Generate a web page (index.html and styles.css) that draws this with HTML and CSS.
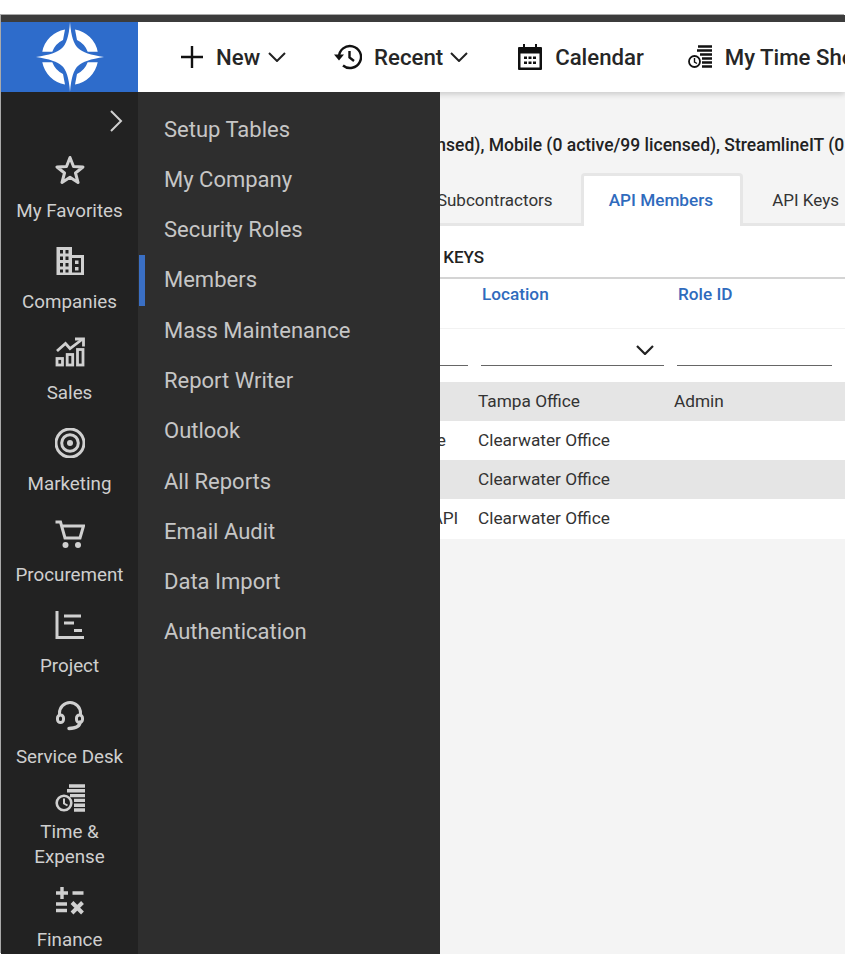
FILE: index.html
```html
<!DOCTYPE html>
<html lang="en">
<head>
<meta charset="utf-8">
<title>Members</title>
<link rel="stylesheet" href="styles.css">
</head>
<body>
<div class="frame">
  <div class="topline"></div>
  <div class="shell">
    <aside class="rail">
      <div class="logo">
        <svg width="70" height="70" viewBox="0 0 70 70" fill="#fff">
          <path d="M35 0 Q36.500 21 43.500 26.500 Q49 32 69 35 Q49 38 43.500 43.500 Q36.500 49 35 70 Q33.500 49 26.500 43.500 Q21 38 1 35 Q21 32 26.500 26.500 Q33.500 21 35 0Z"/>
          <path d="M40 7.500 A28 28 0 0 1 62.700 29.700 L52.700 29.700 A21 21 0 0 0 42 18Z"/>
          <path d="M40 62.500 A28 28 0 0 0 62.700 40.300 L52.700 40.300 A21 21 0 0 1 42 52Z"/>
          <path d="M30 7.500 A28 28 0 0 0 7.300 29.700 L17.300 29.700 A21 21 0 0 1 28 18Z"/>
          <path d="M30 62.500 A28 28 0 0 1 7.300 40.300 L17.300 40.300 A21 21 0 0 0 28 52Z"/>
        </svg>
      </div>
      <div class="rail-body">
        <div class="collapse">
          <svg width="14" height="22" viewBox="0 0 14 22" fill="none" stroke="#d0d0d0" stroke-width="2"><path d="M2 1 L12 11 L2 21"/></svg>
        </div>
        <div class="rail-item">
          <svg class="rail-icon" viewBox="0 0 30 30" fill="none" stroke="#d0d0d0" stroke-width="3" stroke-linejoin="round"><path d="M15 2.500 L18.500 11.500 L28 12 L20.500 18 L23 27.500 L15 22.300 L7 27.500 L9.500 18 L2 12 L11.500 11.500Z"/></svg>
          <span>My Favorites</span>
        </div>
        <div class="rail-item">
          <svg class="rail-icon" viewBox="0 0 30 30" fill="#d0d0d0"><path fill-rule="evenodd" d="M1.500 1 H17 V9 H29 V29 H1.500Z M5 4 V7.500 H8 V4Z M10.500 4 V7.500 H13.500 V4Z M5 10.500 V14 H8 V10.500Z M10.500 10.500 V14 H13.500 V10.500Z M5 17 V20.500 H8 V17Z M10.500 17 V20.500 H13.500 V17Z M5 23.500 V26.500 H8 V23.500Z M10.500 23.500 V26.500 H13.500 V23.500Z M17 12 V26.500 H26 V12Z M20 14.500 H23.500 V18 H20Z M20 21 H23.500 V24.500 H20Z"/></svg>
          <span>Companies</span>
        </div>
        <div class="rail-item">
          <svg class="rail-icon" viewBox="0 0 30 30" fill="none" stroke="#d0d0d0" stroke-width="2.800"><path d="M2 14 L10.500 6.500 L15 11.500 L27 2.500"/><path d="M20 2 H28.500 V9.500"/><rect x="2" y="21.500" width="5.500" height="6.500"/><rect x="12.200" y="17.500" width="5.500" height="10.500"/><rect x="22.500" y="12.500" width="5.500" height="15.500"/></svg>
          <span>Sales</span>
        </div>
        <div class="rail-item">
          <svg class="rail-icon" viewBox="0 0 30 30" fill="none" stroke="#d0d0d0" stroke-width="3"><circle cx="15" cy="15" r="14"/><circle cx="15" cy="15" r="8.300"/><circle cx="15" cy="15" r="3" fill="#d0d0d0" stroke="none"/></svg>
          <span>Marketing</span>
        </div>
        <div class="rail-item">
          <svg class="rail-icon" viewBox="0 0 30 30" fill="none" stroke="#d0d0d0" stroke-width="3"><path d="M0.500 3 H5.500 L10 19 H25 L28.500 7 H7"/><circle cx="10.500" cy="26" r="3" fill="#d0d0d0" stroke="none"/><circle cx="23" cy="26" r="3" fill="#d0d0d0" stroke="none"/></svg>
          <span>Procurement</span>
        </div>
        <div class="rail-item">
          <svg class="rail-icon" viewBox="0 0 30 30" fill="none" stroke="#d0d0d0" stroke-width="3"><path d="M2 1 V27.500 H29"/><path d="M9 6 H26"/><path d="M9 13 H19"/><path d="M19 20.500 H27"/></svg>
          <span>Project</span>
        </div>
        <div class="rail-item">
          <svg class="rail-icon" viewBox="0 0 30 30" fill="none" stroke="#d0d0d0" stroke-width="3"><path d="M4.500 15 V12 A10.500 10.500 0 0 1 25.500 12 V15"/><rect x="2.500" y="14" width="6" height="7.500" rx="3"/><rect x="21.500" y="14" width="6" height="7.500" rx="3"/><path d="M25 21 Q25 27 14 27.500" stroke-linecap="round" stroke-width="3.400"/></svg>
          <span>Service Desk</span>
        </div>
        <div class="rail-item rail-item-tight">
          <svg class="rail-icon" viewBox="0 0 30 30" fill="none" stroke="#d0d0d0"><circle cx="9" cy="19" r="7.300" stroke-width="2.600"/><path d="M9 14.500 V19.500 L12.500 21.500" stroke-width="2"/><path d="M14 2 H30 M12 6.800 H30 M15 11.600 H30 M19 16.400 H30 M19 21.200 H30 M19 26 H30" stroke-width="3.400"/></svg>
          <span>Time &amp;<br>Expense</span>
        </div>
        <div class="rail-item rail-item-last">
          <svg class="rail-icon" viewBox="0 0 30 30" fill="none" stroke="#d0d0d0" stroke-width="3.400"><path d="M1 8 H13 M7 2 V14 M17.500 8 H28.500"/><path d="M1 19 H12 M1 25.500 H12"/><path d="M17 17.500 L27.500 28 M27.500 17.500 L17 28" stroke-width="4"/></svg>
          <span>Finance</span>
        </div>
      </div>
    </aside>

    <main class="main">
      <nav class="nav">
        <div class="nav-item nav-new">
          <svg width="22" height="22" viewBox="0 0 22 22" stroke="#111" stroke-width="2.400"><path d="M11 0 V22 M0 11 H22"/></svg>
          <span>New</span>
          <svg class="caret" width="18" height="10" viewBox="0 0 18 10" fill="none" stroke="#222" stroke-width="2"><path d="M1 1 L9 9 L17 1"/></svg>
        </div>
        <div class="nav-item nav-recent">
          <svg width="28" height="26" viewBox="0 0 28 26" fill="none" stroke="#111" stroke-width="2.400"><path d="M5 13 A11 11 0 1 1 9 21.500"/><path d="M0 10.500 H10 L5 16.500Z" fill="#111" stroke="none"/><path d="M15.500 7 V13.500 L20 17"/></svg>
          <span>Recent</span>
          <svg class="caret" width="18" height="10" viewBox="0 0 18 10" fill="none" stroke="#222" stroke-width="2"><path d="M1 1 L9 9 L17 1"/></svg>
        </div>
        <div class="nav-item nav-cal">
          <svg width="24" height="26" viewBox="0 0 24 26"><path fill="#111" fill-rule="evenodd" d="M1 3 H5 V0 H7 V3 H17 V0 H19 V3 H23 A1 1 0 0 1 24 4 V25 A1 1 0 0 1 23 26 H1 A1 1 0 0 1 0 25 V4 A1 1 0 0 1 1 3Z M2.500 9.500 V23.500 H21.500 V9.500Z"/><path fill="#111" d="M6 12.500 H9 V15 H6Z M10.500 12.500 H13.500 V15 H10.500Z M15 12.500 H18 V15 H15Z M6 17.500 H9 V20 H6Z M10.500 17.500 H13.500 V20 H10.500Z M15 17.500 H18 V20 H15Z"/></svg>
          <span>Calendar</span>
        </div>
        <div class="nav-item nav-time">
          <svg width="24" height="24" viewBox="0 0 24 24" fill="none" stroke="#111"><circle cx="6.500" cy="16.500" r="5.500" stroke-width="1.800"/><path d="M6.500 13 V17 L9 18.500" stroke-width="1.400"/><path d="M10 1.500 H24 M9 5.500 H24 M12 9.500 H24 M14 13.500 H24 M14 17.500 H24 M14 21.500 H24" stroke-width="2.600"/></svg>
          <span>My Time Sheet</span>
        </div>
      </nav>

      <p class="license">Standard (5 active/99 licensed), Mobile (0 active/99 licensed), StreamlineIT (0 active/99 licensed)</p>

      <div class="tabs">
        <div class="tab">Members</div>
        <div class="tab">Subcontractors</div>
        <div class="tab tab-active">API Members</div>
        <div class="tab">API Keys</div>
      </div>

      <div class="panel">
        <h2 class="panel-title">API KEYS</h2>
        <div class="grid grid-head">
          <div>Member ID</div><div>Type</div><div>Location</div><div>Role ID</div>
        </div>
        <div class="grid grid-filter">
          <div class="filter"></div>
          <div class="filter"></div>
          <div class="filter filter-select">
            <svg width="18" height="10" viewBox="0 0 18 10" fill="none" stroke="#222" stroke-width="2.200"><path d="M1 1 L9 9 L17 1"/></svg>
          </div>
          <div class="filter filter-role"></div>
        </div>
        <div class="grid grid-row grid-row-alt"><div>Jsmith</div><div></div><div>Tampa Office</div><div>Admin</div></div>
        <div class="grid grid-row"><div>Twilson</div><div>Employee</div><div>Clearwater Office</div><div></div></div>
        <div class="grid grid-row grid-row-alt"><div>Mjones</div><div></div><div>Clearwater Office</div><div></div></div>
        <div class="grid grid-row"><div>Svcapi</div><div>Service API</div><div>Clearwater Office</div><div></div></div>
      </div>

      <div class="flyout">
        <a class="fly-item">Setup Tables</a>
        <a class="fly-item">My Company</a>
        <a class="fly-item">Security Roles</a>
        <a class="fly-item fly-item-active">Members</a>
        <a class="fly-item">Mass Maintenance</a>
        <a class="fly-item">Report Writer</a>
        <a class="fly-item">Outlook</a>
        <a class="fly-item">All Reports</a>
        <a class="fly-item">Email Audit</a>
        <a class="fly-item">Data Import</a>
        <a class="fly-item">Authentication</a>
      </div>
    </main>
  </div>
</div>
</body>
</html>
```
FILE: styles.css
```css
* { box-sizing: border-box; }
html, body { margin: 0; padding: 0; background: #fff; }
body { font-family: Roboto, "Liberation Sans", sans-serif; height: 960px; overflow: hidden; }

.frame {
  width: 844px;
  height: 939px;
  margin: 15px 0 0 1px;
  display: flex;
  flex-direction: column;
  overflow: hidden;
  box-shadow: -1px -1px 0 0 #aaa;
}
.topline { height: 7px; background: #3c3c3c; flex: none; }
.shell { flex: 1; display: flex; min-height: 0; }

.rail { width: 137px; flex: none; display: flex; flex-direction: column; background: #222; }
.logo { height: 70px; background: #2e6ccb; display: flex; align-items: center; justify-content: center; flex: none; }
.rail-body { padding-top: 18px; color: #cfcfcf; }
.collapse { height: 22px; display: flex; justify-content: flex-end; padding-right: 15px; margin-bottom: 23px; }
.rail-item { display: flex; flex-direction: column; align-items: center; margin-bottom: 22px; font-size: 18.800px; line-height: 25px; text-align: center; }
.rail-item span { margin-top: 14px; }
.rail-icon { width: 30px; height: 30px; display: block; }
.rail-item-tight { margin-top: -8px; margin-bottom: 15px; }
.rail-item-tight span { margin-top: 6px; }
.rail-item-last span { margin-top: 13px; }

.main { flex: 1; min-width: 0; position: relative; overflow: hidden; background: #f4f4f4; }
.nav {
  height: 70px;
  background: #fff;
  display: flex;
  align-items: center;
  padding-left: 43px;
  white-space: nowrap;
  font-size: 22.200px;
  font-weight: 500;
  color: #262626;
  box-shadow: 0 2px 6px rgba(0,0,0,.18);
  position: relative;
}
.nav-item { display: flex; align-items: center; flex: none; }
.nav-item span { margin-left: 13px; }
.caret { margin-left: 8px; }
.nav-recent { margin-left: 48px; }
.nav-recent span { margin-left: 12px; }
.nav-recent .caret { margin-left: 7px; }
.nav-cal { margin-left: 50px; }
.nav-time { margin-left: 44px; }

.license { margin: 43px 0 0; height: 20px; line-height: 20px; padding-left: 97.500px; font-size: 17.500px; font-weight: 500; color: #222; white-space: nowrap; }

.tabs { display: flex; margin-top: 18px; height: 53px; padding-left: 140px; border-bottom: 3px solid #e6e6e6; font-size: 17px; color: #333; }
.tab { padding: 0 29px; height: 53px; line-height: 54px; flex: none; }
.tab-active { background: #fff; color: #2f6bbd; font-size: 17.200px; font-weight: 500; border: 3px solid #e6e6e6; border-bottom: 0; border-radius: 4px 4px 0 0; padding: 0 27px 0 25px; margin-left: -1px; height: 53px; line-height: 49px; }

.panel-title { margin: 0; background: #fff; height: 53px; line-height: 62px; padding-left: 274px; font-size: 17px; font-weight: 500; color: #222; border-bottom: 2px solid #d4d4d4; }
.grid { display: grid; grid-template-columns: 229px 107px 196px 1fr; background: #fff; }
.grid > div { padding-left: 4px; white-space: nowrap; overflow: hidden; }
.grid-head { height: 50px; border-bottom: 1px solid #f2f2f2; font-size: 17.200px; font-weight: 500; color: #2f6bbd; line-height: 30px; }
.grid-head > div { padding-left: 8px; }
.grid-filter { height: 52.500px; }
.grid-filter > .filter { height: 36.500px; border-bottom: 1.500px solid #666; margin: 0 6px 0 -2px; display: flex; justify-content: flex-end; align-items: center; padding: 6px 10px 0 0; }
.grid-filter > .filter-select { margin: 0 6px 0 7px; }
.grid-filter > .filter-role { margin: 0 13px 0 7px; }
.grid-row { height: 39.300px; line-height: 39.300px; font-size: 17.250px; color: #333; }
.grid-row-alt { background: #e5e5e5; }

.flyout { position: absolute; left: 0; top: 70px; bottom: 0; width: 302px; background: #2e2e2e; padding-top: 12.500px; }
.fly-item { display: block; height: 50.300px; line-height: 50.300px; padding-left: 26px; font-size: 22px; color: #c6c6c6; position: relative; }
.fly-item-active::before { content: ""; position: absolute; left: 1px; top: 0; width: 6px; height: 100%; background: #3a6fc4; }
```
